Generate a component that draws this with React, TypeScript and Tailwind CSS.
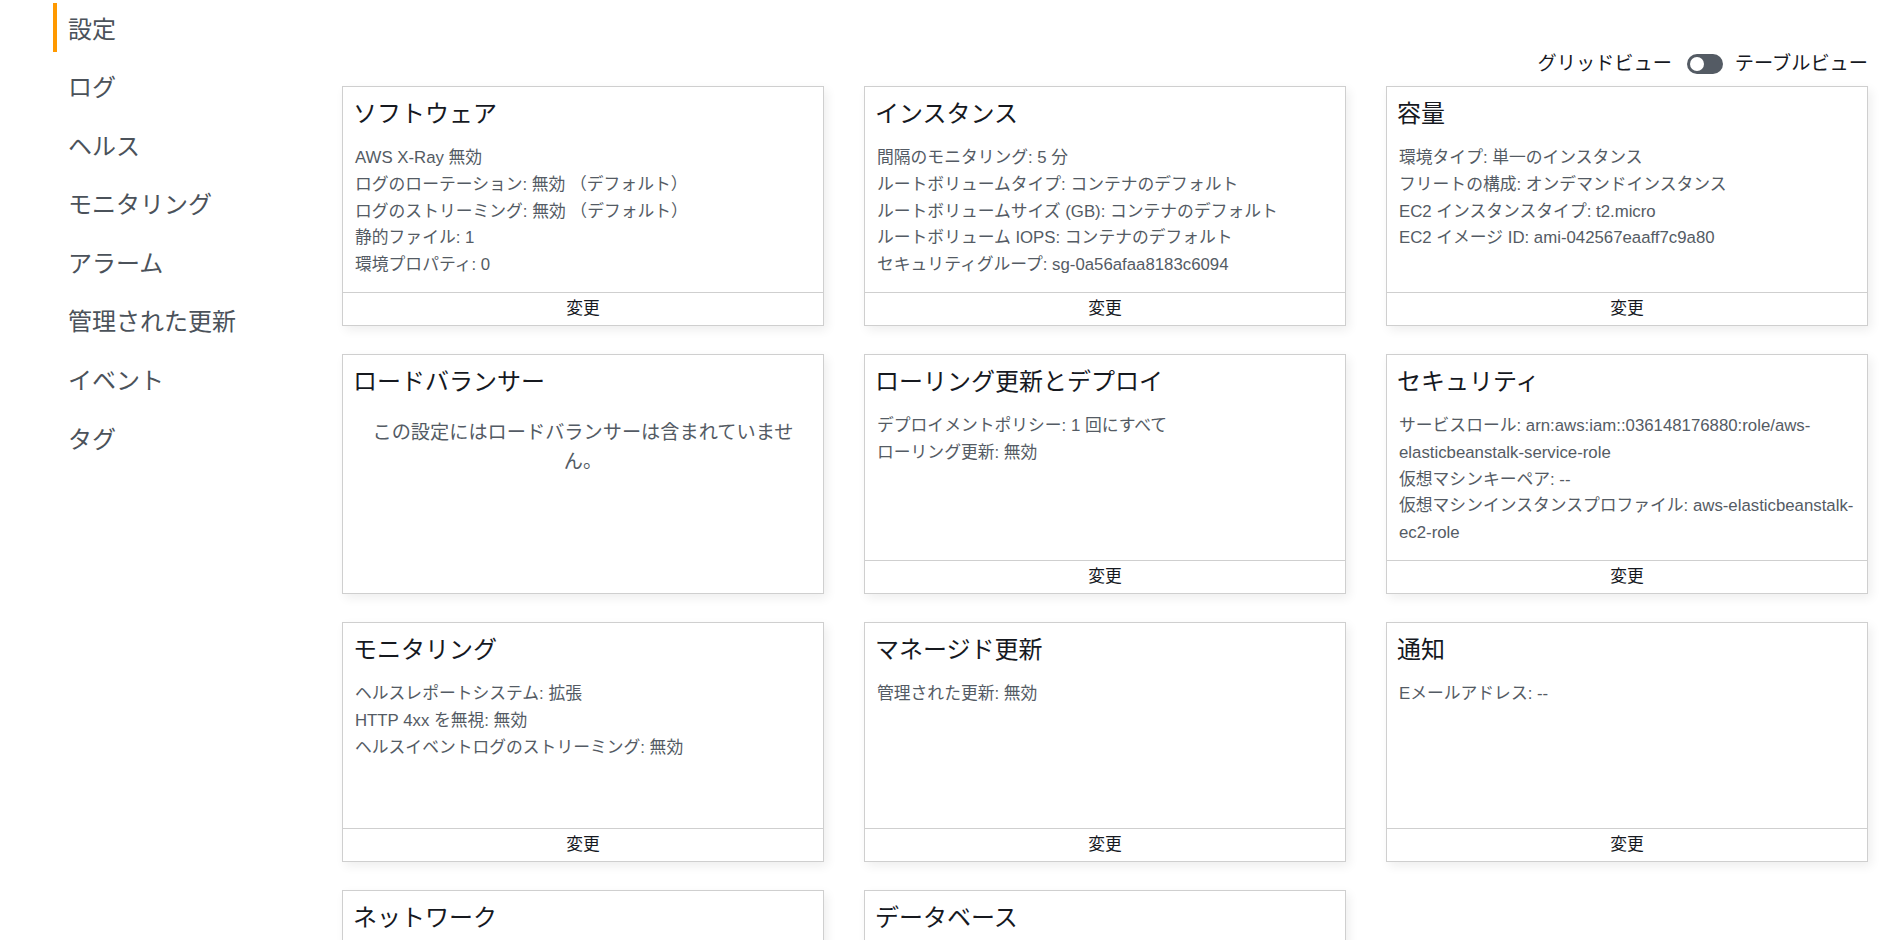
import React from 'react';

interface Card {
    title: string;
    lines?: string[];
    note?: string;
    footer: boolean;
}

const navItems = ['設定', 'ログ', 'ヘルス', 'モニタリング', 'アラーム', '管理された更新', 'イベント', 'タグ'];

const cards: Card[] = [
    {
        title: 'ソフトウェア',
        lines: ['AWS X-Ray 無効', 'ログのローテーション: 無効 （デフォルト）', 'ログのストリーミング: 無効 （デフォルト）', '静的ファイル: 1', '環境プロパティ: 0'],
        footer: true,
    },
    {
        title: 'インスタンス',
        lines: [
            '間隔のモニタリング: 5 分',
            'ルートボリュームタイプ: コンテナのデフォルト',
            'ルートボリュームサイズ (GB): コンテナのデフォルト',
            'ルートボリューム IOPS: コンテナのデフォルト',
            'セキュリティグループ: sg-0a56afaa8183c6094',
        ],
        footer: true,
    },
    {
        title: '容量',
        lines: ['環境タイプ: 単一のインスタンス', 'フリートの構成: オンデマンドインスタンス', 'EC2 インスタンスタイプ: t2.micro', 'EC2 イメージ ID: ami-042567eaaff7c9a80'],
        footer: true,
    },
    {
        title: 'ロードバランサー',
        note: 'この設定にはロードバランサーは含まれていません。',
        footer: false,
    },
    {
        title: 'ローリング更新とデプロイ',
        lines: ['デプロイメントポリシー: 1 回にすべて', 'ローリング更新: 無効'],
        footer: true,
    },
    {
        title: 'セキュリティ',
        lines: [
            'サービスロール: arn:aws:iam::036148176880:role/aws-\nelasticbeanstalk-service-role',
            '仮想マシンキーペア: --',
            '仮想マシンインスタンスプロファイル: aws-elasticbeanstalk-\nec2-role',
        ],
        footer: true,
    },
    {
        title: 'モニタリング',
        lines: ['ヘルスレポートシステム: 拡張', 'HTTP 4xx を無視: 無効', 'ヘルスイベントログのストリーミング: 無効'],
        footer: true,
    },
    {
        title: 'マネージド更新',
        lines: ['管理された更新: 無効'],
        footer: true,
    },
    {
        title: '通知',
        lines: ['Eメールアドレス: --'],
        footer: true,
    },
    {
        title: 'ネットワーク',
        lines: [],
        footer: true,
    },
    {
        title: 'データベース',
        lines: [],
        footer: true,
    },
];

const ConfigCard: React.FC<{ card: Card }> = ({ card }) => (
    <div className="h-[240px] flex flex-col bg-white border border-[#cfcfcf] shadow-[3px_4px_10px_rgba(0,0,0,0.07)]">
        <div className="flex-1 pl-[12px] pr-[4px] pt-[10px] overflow-hidden">
            <h3 className="-ml-[2px] text-[24px] leading-[34px] text-[#16191f] font-normal">{card.title}</h3>
            {card.note ? (
                <p className="mt-[14px] pt-[6px] pl-[12px] pr-[20px] text-center text-[19.2px] leading-[28.8px] text-[#545b64]">{card.note}</p>
            ) : (
                <div className="mt-[14px] text-[16.8px] leading-[26.8px] text-[#545b64] whitespace-pre-line">
                    {card.lines?.map((line, i) => (
                        <div key={i}>{line}</div>
                    ))}
                </div>
            )}
        </div>
        {card.footer && (
            <div className="h-[33px] border-t border-[#cfcfcf] flex items-center justify-center text-[16.8px] text-[#16191f]">
                変更
            </div>
        )}
    </div>
);

const App: React.FC = () => {
    return (
        <div
            className="flex min-h-screen bg-white"
            style={{ fontFamily: '"Liberation Sans", "Noto Sans CJK JP", sans-serif' }}
        >
            {/* Sidebar */}
            <nav className="w-[342px] shrink-0 pl-[53px] pt-[3px]">
                <ul className="flex flex-col gap-[9.6px]">
                    {navItems.map((item, i) => (
                        <li
                            key={item}
                            className={`h-[49px] flex items-center pl-[11px] pt-[4px] text-[24px] text-[#4b525a] ${i === 0 ? 'border-l-4 border-[#ff9900]' : 'border-l-4 border-transparent'}`}
                        >
                            {item}
                        </li>
                    ))}
                </ul>
            </nav>

            {/* Main */}
            <main className="flex-1 pr-[26px] pt-[52px]">
                <div className="h-[24px] mb-[10px] flex items-center justify-end text-[19.2px] text-[#16191f]">
                    <span>グリッドビュー</span>
                    <span className="ml-[15px] mr-[12px] w-[36px] h-[20px] rounded-full bg-[#545b64] flex items-center px-[3px]">
                        <span className="w-[14px] h-[14px] rounded-full bg-white"></span>
                    </span>
                    <span>テーブルビュー</span>
                </div>

                <div className="grid grid-cols-3 gap-x-[40px] gap-y-[28px]">
                    {cards.map(card => (
                        <ConfigCard key={card.title} card={card} />
                    ))}
                </div>
            </main>
        </div>
    );
};

export default App;
